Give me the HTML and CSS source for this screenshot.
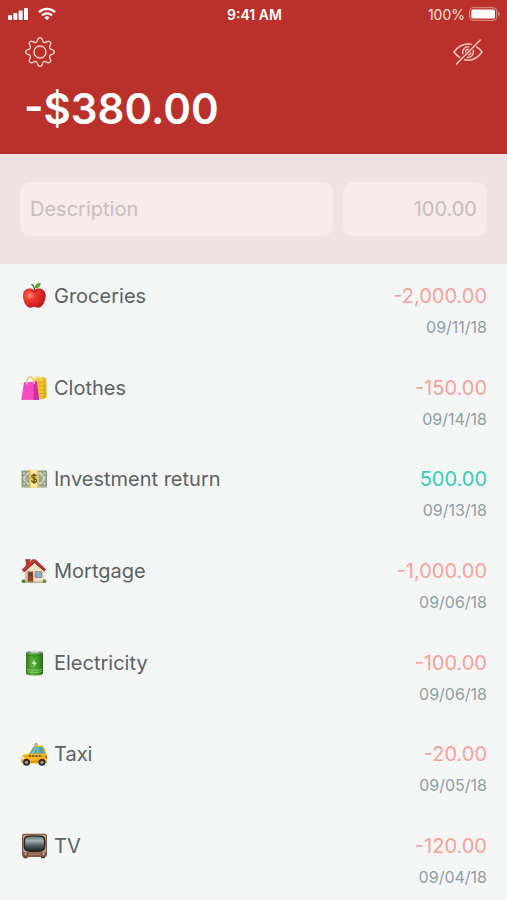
FILE: index.html
```html
<!DOCTYPE html>
<html lang="en">
<head>
<meta charset="utf-8">
<meta name="viewport" content="width=device-width, initial-scale=1">
<title>Expenses</title>
<link rel="stylesheet" href="styles.css">
</head>
<body>
<header class="header">
  <div class="status">
    <div class="status-left">
      <svg width="21" height="14" viewBox="0 0 21 14" fill="#fff" aria-hidden="true"><rect y="8" width="4" height="5" rx="1"/><rect x="5.3" y="6" width="4" height="7" rx="1"/><rect x="10.6" y="3.5" width="4" height="9.5" rx="1"/><rect x="16" y="1" width="4" height="12" rx="1"/></svg>
      <svg width="18" height="14" viewBox="0 0 18 14" aria-hidden="true"><g fill="none" stroke="#fff" stroke-width="2.3"><path d="M1 5.1a11.4 11.4 0 0 1 16 0"/><path d="M4 8.4a7.2 7.2 0 0 1 10 0"/></g><path d="M6.3 10.4a4 4 0 0 1 5.4 0L9 13.1z" fill="#fff"/></svg>
    </div>
    <span class="status-time">9:41 AM</span>
    <div class="status-right">
      <span>100%</span>
      <svg width="32" height="14" viewBox="0 0 32 14" aria-hidden="true"><rect x=".7" y=".7" width="27" height="12.6" rx="3.2" fill="none" stroke="#e3958d"/><rect x="2.4" y="2.4" width="23.6" height="9.2" rx="1.5" fill="#fff"/><path d="M29.2 4.8c2 .6 2 3.8 0 4.4z" fill="#e3958d"/></svg>
    </div>
  </div>
  <div class="toolbar">
    <button class="tool" type="button" aria-label="Settings">
      <svg width="32" height="32" viewBox="-16 -16 32 32" fill="none" stroke="#f9cdc2" stroke-width="1.4">
        <defs><path id="tooth" d="M-4-9.7C-2.9-10.16-2.5-11-2.3-12.3C-2-13.9-1.3-14.3 0-14.3S2-13.9 2.3-12.3C2.5-11 2.9-10.16 4-9.7"/></defs>
        <use href="#tooth"/><use href="#tooth" transform="rotate(45)"/><use href="#tooth" transform="rotate(90)"/><use href="#tooth" transform="rotate(135)"/><use href="#tooth" transform="rotate(180)"/><use href="#tooth" transform="rotate(225)"/><use href="#tooth" transform="rotate(270)"/><use href="#tooth" transform="rotate(315)"/>
        <circle r="6"/>
      </svg>
    </button>
    <button class="tool" type="button" aria-label="Hide amounts">
      <svg width="32" height="32" viewBox="0 0 32 32" fill="none" stroke="#f9cdc2" stroke-width="1.4" stroke-linecap="round">
        <path d="M4.500 28 28.200 4"/>
        <path d="M19.600 8.400A18 18 0 0 0 16 8C10.500 8 5.500 11 2 16c1.600 2.300 3.500 4.100 5.700 5.400"/>
        <path d="M24.500 10.800C26.600 12 28.500 13.800 30 16c-3.500 5.100-8.400 8.200-14 8.200-1.200 0-2.300-.1-3.400-.4"/>
        <path d="M16.700 10.700a5.500 5.500 0 0 0-5.900 6.900"/>
        <path d="M21.300 14.500a5.500 5.500 0 0 1-6 6.900"/>
        <path d="M16.200 13.200a3 3 0 0 0-2.700 2.700M18.700 17a3 3 0 0 1-1.900 1.900"/>
      </svg>
    </button>
  </div>
  <h1 class="balance">-$380.00</h1>
</header>
<form class="entry">
  <input class="field" type="text" placeholder="Description" aria-label="Description">
  <input class="field field-amount" type="text" inputmode="decimal" placeholder="100.00" aria-label="Amount">
</form>
<ul class="list">
  <li class="item">
    <div class="item-main">
      <svg class="emoji" viewBox="0 0 28 28" aria-hidden="true">
        <defs><radialGradient id="apple" cx=".3" cy=".35" r=".8"><stop offset="0" stop-color="#ff8a72"/><stop offset=".3" stop-color="#ef3a30"/><stop offset="1" stop-color="#b80d18"/></radialGradient></defs>
        <path d="M14 8C10 5 3 6.500 3 13.500c0 6 3.500 12.300 7.500 12.300 1.600 0 2.200-.7 3.700-.7s2.200.7 3.800.7c4 0 7.700-6.300 7.700-12.300C25.700 6.500 18 5 14 8z" fill="url(#apple)"/>
        <path d="M10 7.800c2 1.300 6 1.300 8.200 0-1.600 2.200-6.500 2.500-8.200 0z" fill="#8c1016"/>
        <path d="M14.200 8.600C14 6 12.800 3.800 11 2.600l1.100-.9c1.900 1.400 3 3.600 3.200 6.800z" fill="#6b4a26"/>
        <path d="M14.500 6.300c.3-3.600 2.700-5.500 6.300-5.300-.3 3.500-2.600 5.600-6.300 5.300z" fill="#4ea82e"/>
      </svg>
      <span class="name">Groceries</span><span class="amount">-2,000.00</span>
    </div>
    <time class="date" datetime="2018-09-11">09/11/18</time>
  </li>
  <li class="item">
    <div class="item-main">
      <svg class="emoji" viewBox="0 0 28 28" aria-hidden="true">
        <path d="M13 4.500 23.500 3l2.700 2 .3 18.500-3 1.500-7 .2z" fill="#f5c92c"/>
        <path d="M15 8h10.500M16 12h10M16 16h10M16 19.500h10M16 23h10" stroke="#dd9d22" stroke-width="1.100"/>
        <path d="m23.500 3 2.700 2 .3 18.500-3 1.500z" fill="#d8a21d" opacity=".6"/>
        <path d="M14.500 7c0-6 5.500-6 6.200 0" fill="none" stroke="#f5df86" stroke-width="1.500"/>
        <path d="M4 8.300 16.800 7.500l2.200 18.300-17.800.3z" fill="#f44cc4"/>
        <path d="m13.500 7.700 3.300-.2 2.200 18.300-5.500.1z" fill="#c832a6"/>
        <path d="M6.800 10.500c-.4-9.300 7-10.300 7.500-.5" fill="none" stroke="#f6c487" stroke-width="1.600"/>
      </svg>
      <span class="name">Clothes</span><span class="amount">-150.00</span>
    </div>
    <time class="date" datetime="2018-09-14">09/14/18</time>
  </li>
  <li class="item">
    <div class="item-main">
      <svg class="emoji" viewBox="0 0 28 28" aria-hidden="true">
        <rect x="1.500" y="5.500" width="25.500" height="17" rx=".5" fill="#8b9784"/>
        <rect x="3" y="7" width="22.500" height="12.800" fill="#cfd5c4" stroke="#9ba78f" stroke-width=".7"/>
        <ellipse cx="14" cy="13.500" rx="9" ry="5.700" fill="#a0a995"/>
        <path d="M3 10.500c2 0 3-1.500 3-3.500M3 16.300c2 0 3 1.500 3 3.500M25.500 10.500c-2 0-3-1.500-3-3.500M25.500 16.300c-2 0-3 1.500-3 3.500" fill="none" stroke="#69765e"/>
        <path d="M3 21.200h22.500" stroke="#c5cdb8" stroke-width=".8"/>
        <path d="M9.500 5h9.200v17.800H9.500z" fill="#f3ca46"/><path d="M11 5h6v17.800h-6z" fill="#fae9a9"/>
        <ellipse cx="14.100" cy="13.500" rx="3.800" ry="5" fill="#f0cb5a"/>
        <path d="M16.400 11.200c-.4-1.900-4.600-1.900-4.600.3s4.800 1.500 4.800 4-4.700 2.400-5-.1M14.100 8.500v10.200" fill="none" stroke="#5f4b28" stroke-width="1.200"/>
      </svg>
      <span class="name">Investment return</span><span class="amount amount-in">500.00</span>
    </div>
    <time class="date" datetime="2018-09-13">09/13/18</time>
  </li>
  <li class="item">
    <div class="item-main">
      <svg class="emoji" viewBox="0 0 28 28" aria-hidden="true">
        <path d="M5.800 3h4v7h-4z" fill="#a8483a"/><path d="M5.300 2.200h5v1.500h-5z" fill="#8c2f2b"/>
        <path d="M4.800 13.500 14.500 4.500l9.800 8.500v12.500H4.800z" fill="#f3dfc0"/>
        <path d="M4.800 13.500 8 10.500v15H4.800z" fill="#dcbf9b"/>
        <path d="M12 2.500h3.500L26 12.300l-1.500 1.900-10-8.700z" fill="#b3302f"/>
        <path d="M12 2.500 1.700 12.700l2 2.300L14.500 5.500l1-3z" fill="#c23a37"/>
        <path d="m3.700 15 10.800-9.500 10 8.700" fill="none" stroke="#7d2323" stroke-width="1"/>
        <path d="M7.800 14.500h5.400v11H7.800z" fill="#87492f"/><path d="M9.200 16h2.600v3H9.200z" fill="#56423b"/>
        <path d="M15.300 14.500h6.500v6h-6.500z" fill="#78aed2" stroke="#a08c7b"/><path d="M18.500 14.500v6" stroke="#9cc6df" stroke-width=".8"/>
        <path d="M4 24.600h21v1.200H4z" fill="#b9a588"/>
        <circle cx="3.500" cy="24.200" r="1.900" fill="#4f892f"/><circle cx="24.500" cy="24.200" r="1.900" fill="#5e9c35"/>
      </svg>
      <span class="name">Mortgage</span><span class="amount">-1,000.00</span>
    </div>
    <time class="date" datetime="2018-09-06">09/06/18</time>
  </li>
  <li class="item">
    <div class="item-main">
      <svg class="emoji" viewBox="0 0 28 28" aria-hidden="true">
        <defs><linearGradient id="cell"><stop stop-color="#317a1d"/><stop offset=".35" stop-color="#5bb03a"/><stop offset=".7" stop-color="#429b29"/><stop offset="1" stop-color="#28691b"/></linearGradient></defs>
        <path d="M6 3.500v21c0 2.600 17 2.600 17 0v-21z" fill="url(#cell)"/>
        <ellipse cx="14.500" cy="3.400" rx="8.300" ry="1.700" fill="#7f9a80"/><ellipse cx="14.500" cy="2.800" rx="4.500" ry="1" fill="#d5dcd5"/>
        <path d="m14.800 10-3 4.800 2.400.2-1 3.600 3.800-5-2.600-.2z" fill="#d6f2b6"/>
        <path d="M7 20.400c4 1.200 11 1.200 15 0M7.500 22.600c4 1.200 10 1.200 14 0" fill="none" stroke="#9bd376" stroke-width=".8"/>
        <path d="M6 5.800c4 1.600 13 1.600 17 0" fill="none" stroke="#2b7522" stroke-width=".8"/>
      </svg>
      <span class="name">Electricity</span><span class="amount">-100.00</span>
    </div>
    <time class="date" datetime="2018-09-06">09/06/18</time>
  </li>
  <li class="item">
    <div class="item-main">
      <svg class="emoji" viewBox="0 0 28 28" aria-hidden="true">
        <path d="M14.500 4c.2-1.600 3.300-1.600 3.500 0v2h-3.500z" fill="#c9b06b"/>
        <path d="M9 13.500 13.200 7c.5-.9 1.300-1.300 2.300-1.300h6.300c1.200 0 2 .5 2.400 1.600l2.600 7.700v6.500c0 1.500-.8 2-2 2H4c-1.500 0-2.500-.8-2.500-2.200v-2.600c0-2.200 1-3.500 3-4.100z" fill="#f8b922"/>
        <path d="m9.500 13.600 4.200-6.200c.3-.4.700-.6 1.200-.6h2.300v6.800zM18.300 6.800h3.200c.8 0 1.400.4 1.700 1.100l1.700 5.700h-6.600z" fill="#4aa5b4"/>
        <path d="m11.500 13 4-5.500h1L13.500 13z" fill="#8ed0d5"/>
        <path d="M2.500 16.200h24" stroke="#c78f1b" stroke-width=".8"/><path d="M9 16h13" stroke="#50401f" stroke-width="1.400" stroke-dasharray="2 1.200"/>
        <path d="M1.500 20.700h25v2h-25z" fill="#e08d18"/>
        <ellipse cx="3.100" cy="17.800" rx="1.300" ry="1.400" fill="#fff1b8"/><path d="M25.500 15.800H27v2.700h-1.500z" fill="#c64532"/>
        <circle cx="6.500" cy="22.300" r="3.500" fill="#2c2d30"/><circle cx="6.500" cy="22.300" r="1.600" fill="#9c9fa0"/>
        <circle cx="22" cy="22.300" r="3.500" fill="#2c2d30"/><circle cx="22" cy="22.300" r="1.600" fill="#9c9fa0"/>
      </svg>
      <span class="name">Taxi</span><span class="amount">-20.00</span>
    </div>
    <time class="date" datetime="2018-09-05">09/05/18</time>
  </li>
  <li class="item">
    <div class="item-main">
      <svg class="emoji" viewBox="0 0 28 28" aria-hidden="true">
        <defs><linearGradient id="screen" x2="0" y2="1"><stop stop-color="#6c7b7c"/><stop offset=".3" stop-color="#a3b1b0"/><stop offset=".65" stop-color="#4f5d5f"/><stop offset="1" stop-color="#1f272a"/></linearGradient></defs>
        <path d="M3.500 24h4v2.200h-4zM21 24h4v2.200h-4z" fill="#4b352c"/>
        <rect x="2" y="1.800" width="25" height="23.200" rx="2" fill="#7b5444"/>
        <rect x="3" y="2.800" width="23" height="21.200" rx="1.500" fill="#b99782"/>
        <path d="M4 4h21v16H4z" fill="#c9ab97"/>
        <path d="M7 3.800c5-.8 10-.8 15 0 2 .4 3 1.700 3.200 3.600.3 3 .3 5.200 0 8.200-.2 2-1.200 3.400-3.200 3.800-5 .8-10 .8-15 0-2-.4-3-1.800-3.200-3.800-.3-3-.3-5.200 0-8.200C4 5.500 5 4.200 7 3.800z" fill="#272425"/>
        <path d="M8 5.100c4.500-.7 8.500-.7 13 0 1.800.3 2.700 1.300 2.800 3 .2 2.400.2 4.400 0 6.800-.1 1.800-1 2.800-2.800 3.100-4.500.7-8.500.7-13 0-1.800-.3-2.700-1.300-2.800-3.100-.2-2.400-.2-4.400 0-6.800.1-1.700 1-2.700 2.800-3z" fill="url(#screen)"/>
        <path d="M3 20.400h23v3.400H3z" fill="#7a5140"/>
        <path d="M8.500 22.100h12" stroke="#b48772" stroke-width="1.200"/><circle cx="5.500" cy="22" r="1" fill="#dfc4af"/><circle cx="23.500" cy="22" r="1" fill="#dfc4af"/>
      </svg>
      <span class="name">TV</span><span class="amount">-120.00</span>
    </div>
    <time class="date" datetime="2018-09-04">09/04/18</time>
  </li>
</ul>
</body>
</html>
```
FILE: styles.css
```css
* { box-sizing: border-box; }

body {
  display: flex;
  flex-direction: column;
  min-height: 100vh;
  margin: 0;
  background: #f3f6f5;
  color: #5d6164;
  font-family: Inter, "Liberation Sans", sans-serif;
  font-size: 20px;
}

.header {
  padding-bottom: 20px;
  background: #ba312c;
  color: #fff;
}

.status {
  display: grid;
  grid-template-columns: 1fr auto 1fr;
  align-items: center;
  height: 28px;
  padding: 0 6px 0 8px;
  font-size: 14px;
}

.status-left,
.status-right {
  display: flex;
  align-items: center;
}

.status-left { gap: 9px; }

.status-right {
  justify-content: flex-end;
  gap: 4px;
  color: #fbe0dc;
}

.status-time { font-weight: 600; }

.toolbar {
  display: flex;
  justify-content: space-between;
  padding: 8px 23px 0 24px;
}

.tool {
  display: block;
  width: 32px;
  height: 32px;
  padding: 0;
  border: 0;
  background: none;
  cursor: pointer;
}

.tool svg { display: block; }

.balance {
  margin: 16px 24px 0;
  font-size: 42px;
  font-weight: 600;
  line-height: 50px;
}

.entry {
  display: grid;
  grid-template-columns: 313fr 144fr;
  gap: 10px;
  padding: 28px 20px;
  background: #ede3e4;
}

.field {
  width: 100%;
  min-width: 0;
  height: 54px;
  padding: 0 10px;
  border: 0;
  border-radius: 10px;
  background: #f5ebea;
  color: #5d6164;
  font: inherit;
}

.field::placeholder {
  color: #c6bdbf;
  opacity: 1;
}

.field-amount { text-align: right; }

.list {
  display: flex;
  flex: 1;
  flex-direction: column;
  justify-content: space-between;
  gap: 16px;
  margin: 0;
  padding: 18px 20px 13px;
  list-style: none;
}

.item {
  display: flex;
  flex-direction: column;
  gap: 7px;
}

.item-main {
  display: flex;
  align-items: center;
  gap: 6px;
  line-height: 28px;
}

.emoji {
  flex: none;
  width: 28px;
  height: 28px;
}

.name { flex: 1; }

.amount { color: #f7a19b; }

.amount-in { color: #35cdb5; }

.date {
  color: #929ca5;
  font-size: 16px;
  line-height: 20px;
  text-align: right;
}
```
